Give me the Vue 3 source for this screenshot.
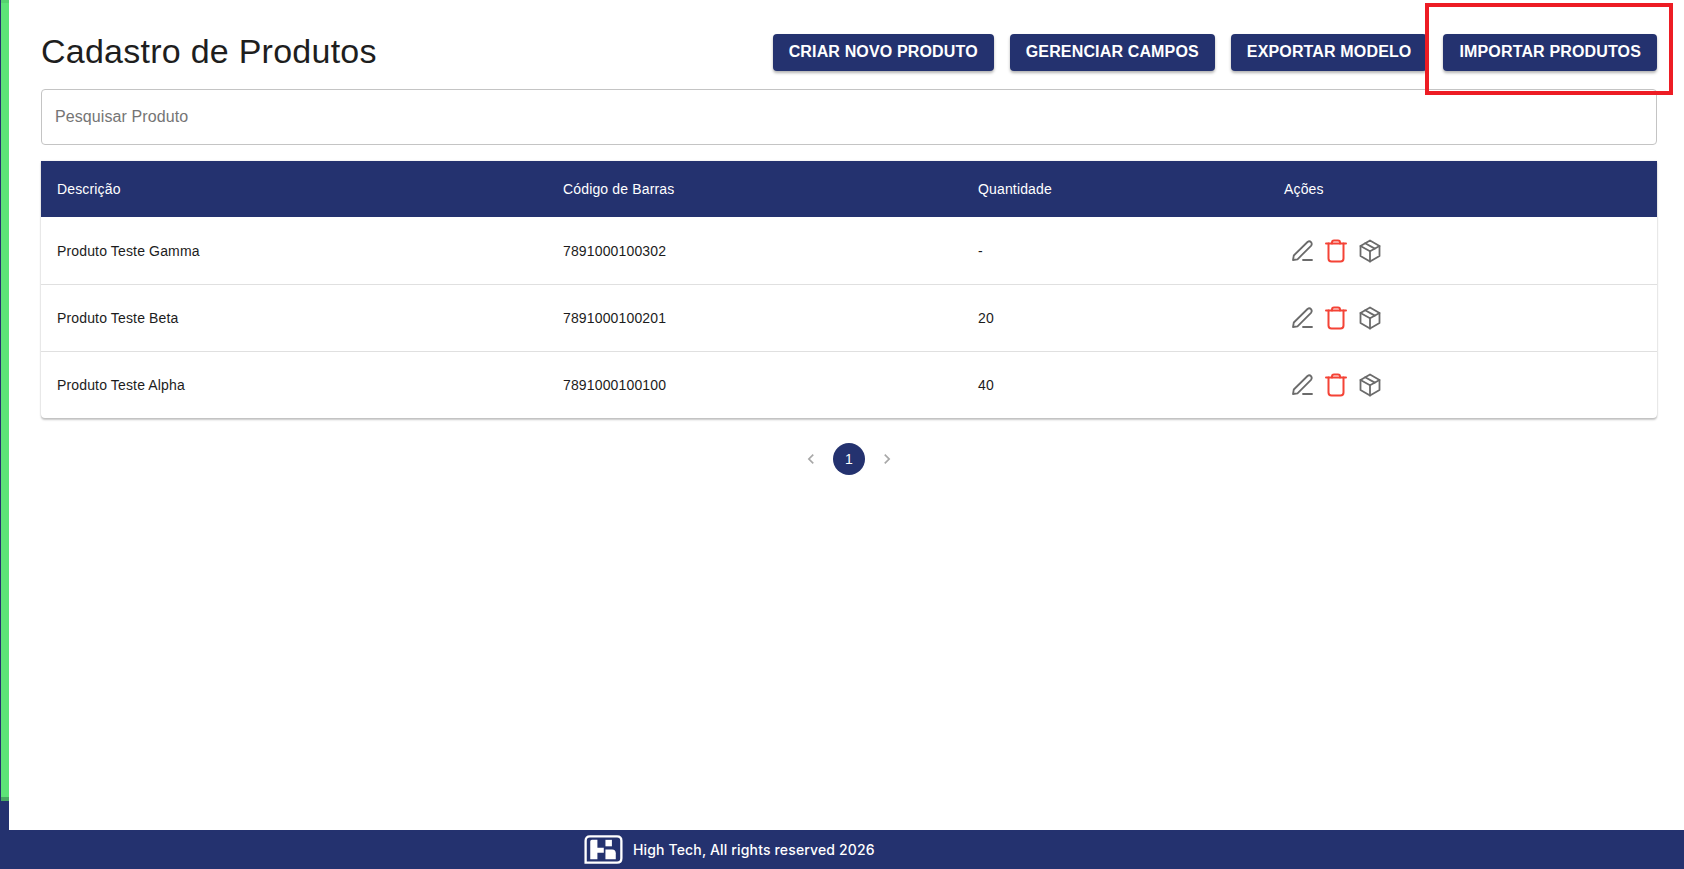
<template>
  <div class="page">
    <div class="workspace">
      <!-- Side rail -->
      <div class="rail">
        <div class="rail__bar"></div>
      </div>

      <main class="content">
        <header class="content__head">
          <h1 class="content__title">Cadastro de Produtos</h1>
          <div class="content__actions">
            <button v-for="label in actions" :key="label" class="btn" type="button">{{ label }}</button>
          </div>
        </header>

        <div class="search">
          <input class="search__input" type="text" placeholder="Pesquisar Produto" />
        </div>

        <div class="table-wrap">
          <table class="table">
            <colgroup>
              <col style="width: 506px" />
              <col style="width: 415px" />
              <col style="width: 306px" />
              <col />
            </colgroup>
            <thead>
              <tr>
                <th>Descrição</th>
                <th>Código de Barras</th>
                <th>Quantidade</th>
                <th>Ações</th>
              </tr>
            </thead>
            <tbody>
              <tr v-for="item in products" :key="item.code">
                <td>{{ item.name }}</td>
                <td>{{ item.code }}</td>
                <td>{{ item.qty }}</td>
                <td>
                  <div class="row-actions">
                    <svg class="icon icon--pen" viewBox="0 0 24 24" fill="none" stroke-linecap="round" stroke-linejoin="round">
                      <path d="M3 21 L3.8 16.5 L17.5 3 Q19.5 1.5 21 3.2 Q22.5 5 21 6.8 L7.5 20.3 Z" />
                      <path d="M13 21 H22" />
                    </svg>
                    <svg class="icon icon--trash" viewBox="0 0 24 24" fill="none" stroke-linecap="round" stroke-linejoin="round">
                      <path d="M2 4.5 H22" />
                      <path d="M4.5 4.5 V19.5 Q4.5 22.5 7.5 22.5 H16.5 Q19.5 22.5 19.5 19.5 V4.5" />
                      <path d="M8 4.5 V3.5 Q8 1.5 10 1.5 H14 Q16 1.5 16 3.5 V4.5" />
                    </svg>
                    <svg class="icon icon--box" viewBox="0 0 24 24" fill="none" stroke-linecap="round" stroke-linejoin="round">
                      <path d="M12 1.5 L21.5 7 V17 L12 22.5 L2.5 17 V7 Z" />
                      <path d="M2.5 7 L12 12.2 L21.5 7" />
                      <path d="M12 12.2 V22.5" />
                      <path d="M7.2 4.3 L16.8 9.6" />
                    </svg>
                  </div>
                </td>
              </tr>
            </tbody>
          </table>
        </div>

        <nav class="pager">
          <svg class="pager__arrow" viewBox="0 0 24 24"><path d="M15.4 7.4 14 6l-6 6 6 6 1.4-1.4-4.6-4.6z" /></svg>
          <span class="pager__page">1</span>
          <svg class="pager__arrow" viewBox="0 0 24 24"><path d="M8.6 16.6 10 18l6-6-6-6-1.4 1.4 4.6 4.6z" /></svg>
        </nav>
      </main>
    </div>

    <footer class="footer">
      <svg class="footer__logo" viewBox="0 0 40 30">
        <path class="footer__logo-frame" d="M1.5 28.5 V6 Q1.5 1.5 6 1.5 H34 Q38.5 1.5 38.5 6 V24 Q38.5 28.5 34 28.5 Z" />
        <path class="footer__logo-mark" d="M8 5 H13.7 V13.3 H20.3 V18.3 H13.7 V25 H6.3 V6.7 Q6.3 5 8 5 Z" />
        <path class="footer__logo-mark" d="M22 5 H28.7 V11.7 H22 Z" />
        <path class="footer__logo-mark" d="M22 15 H29 Q32.7 15 32.7 19 V25 H22 Z" />
      </svg>
      <span class="footer__text">High Tech, All rights reserved 2026</span>
    </footer>

    <!-- Red annotation drawn over the screenshot -->
    <div class="marker"></div>
  </div>
</template>

<script setup>
const actions = ['Criar novo produto', 'Gerenciar campos', 'Exportar modelo', 'Importar produtos']

const products = [
  { name: 'Produto Teste Gamma', code: '7891000100302', qty: '-' },
  { name: 'Produto Teste Beta', code: '7891000100201', qty: '20' },
  { name: 'Produto Teste Alpha', code: '7891000100100', qty: '40' }
]
</script>

<style>
html,
body {
  margin: 0;
  background: #fff;
}
</style>

<style scoped>
.page {
  position: relative;
  display: flex;
  flex-direction: column;
  height: 869px;
  overflow: hidden;
  font-family: "Liberation Sans", Arial, sans-serif;
  color: #1c1c1c;
}

.workspace {
  flex: 1;
  display: flex;
  min-height: 0;
}

/* Side rail */
.rail {
  flex: 0 0 9px;
  background: #24326f;
  padding-left: 1px;
  box-sizing: border-box;
}

.rail__bar {
  height: 801px;
  background: #5de478;
  box-sizing: border-box;
  border-top: 3px solid #56d370;
  border-bottom: 4px solid #47ab62;
}

/* Main content */
.content {
  flex: 1;
  padding: 34px 27px 0 32px;
  min-width: 0;
}

.content__head {
  display: flex;
  align-items: flex-start;
  justify-content: space-between;
  height: 37px;
}

.content__title {
  margin: 0;
  font-size: 34px;
  font-weight: 400;
  line-height: 35px;
  letter-spacing: 0.25px;
  color: #1e1e1e;
}

.content__actions {
  display: flex;
  gap: 16px;
}

.btn {
  height: 37px;
  padding: 0 16px 2px;
  border: 0;
  border-radius: 4px;
  background: #24326f;
  color: #fff;
  font-family: inherit;
  font-size: 16px;
  font-weight: 700;
  letter-spacing: 0.15px;
  text-transform: uppercase;
  box-shadow: 0 2px 3px rgba(0, 0, 0, 0.3);
}

.search {
  margin-top: 18px;
  height: 56px;
  border: 1px solid #c4c4c4;
  border-radius: 4px;
  box-sizing: border-box;
}

.search__input {
  width: 100%;
  height: 100%;
  box-sizing: border-box;
  padding: 0 13px;
  border: 0;
  outline: 0;
  background: transparent;
  font-family: inherit;
  font-size: 16px;
  letter-spacing: 0.1px;
}

.search__input::placeholder {
  color: #757575;
  opacity: 1;
}

/* Table */
.table-wrap {
  margin-top: 16px;
  border-radius: 0 0 4px 4px;
  box-shadow: 0 2px 2px rgba(0, 0, 0, 0.22), 0 0 2px rgba(0, 0, 0, 0.14);
  overflow: hidden;
}

.table {
  width: 100%;
  border-collapse: collapse;
  table-layout: fixed;
  font-size: 14px;
  letter-spacing: 0.15px;
}

.table th {
  height: 56px;
  padding: 0 16px;
  background: #24326f;
  color: #fff;
  font-weight: 400;
  text-align: left;
}

.table td {
  height: 67px;
  padding: 0 16px;
  box-sizing: border-box;
  border-bottom: 1px solid #e0e0e0;
  color: #1c1c1c;
}

.table tbody tr:first-child td {
  padding-top: 2px;
}

.table tbody tr:last-child td {
  border-bottom: 0;
}

.row-actions {
  display: flex;
  align-items: center;
  gap: 10px;
  padding-left: 6px;
}

.icon {
  width: 24px;
  height: 24px;
  stroke-width: 1.8;
}

.icon--pen,
.icon--box {
  stroke: #6b6b6b;
}

.icon--trash {
  stroke: #f44336;
  stroke-width: 2;
}

/* Pagination */
.pager {
  display: flex;
  align-items: center;
  justify-content: center;
  gap: 12px;
  margin-top: 25px;
}

.pager__arrow {
  width: 20px;
  height: 20px;
  fill: #a8a8a8;
}

.pager__page {
  width: 32px;
  height: 32px;
  border-radius: 50%;
  background: #24326f;
  color: #fff;
  font-size: 14px;
  line-height: 32px;
  text-align: center;
}

/* Footer */
.footer {
  flex: 0 0 39px;
  display: flex;
  align-items: center;
  gap: 10px;
  padding-left: 584px;
  background: #24326f;
}

.footer__logo {
  width: 39px;
  height: 29px;
}

.footer__logo-frame {
  fill: none;
  stroke: #fff;
  stroke-width: 2.4;
}

.footer__logo-mark {
  fill: #fff;
}

.footer__text {
  font-family: Inter, "Noto Sans", sans-serif;
  font-size: 14px;
  font-weight: 500;
  letter-spacing: 0.15px;
  color: #fff;
}

.marker {
  position: absolute;
  left: 1425px;
  top: 3px;
  width: 248px;
  height: 92px;
  box-sizing: border-box;
  border: 4px solid #ed1c24;
  pointer-events: none;
}
</style>
